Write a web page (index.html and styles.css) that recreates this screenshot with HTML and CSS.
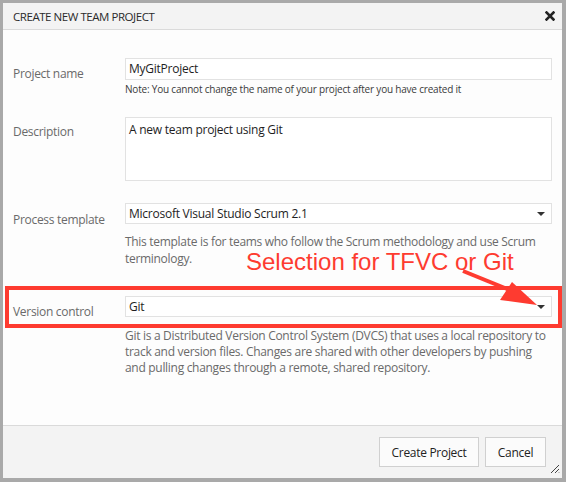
FILE: index.html
```html
<!DOCTYPE html>
<html>
<head>
<meta charset="utf-8">
<link rel="stylesheet" href="styles.css">
</head>
<body>
<div class="dialog">
  <div class="header">
    <span class="title">CREATE NEW TEAM PROJECT</span>
    <svg class="close" width="10" height="10" viewBox="0 0 10 10"><path d="M1.5 1.5 L8.5 8.5 M8.5 1.5 L1.5 8.5" stroke="#222" stroke-width="2.6" stroke-linecap="square"/></svg>
  </div>
  <div class="content">
    <div class="row row-name">
      <div class="label">Project name</div>
      <div class="field">
        <div class="input">MyGitProject</div>
        <div class="note">Note: You cannot change the name of your project after you have created it</div>
      </div>
    </div>
    <div class="row row-desc">
      <div class="label">Description</div>
      <div class="field">
        <div class="textarea">A new team project using Git</div>
      </div>
    </div>
    <div class="row row-proc">
      <div class="label">Process template</div>
      <div class="field">
        <div class="select"><span>Microsoft Visual Studio Scrum 2.1</span><span class="caret"></span></div>
        <div class="help help-proc">This template is for teams who follow the Scrum methodology and use Scrum terminology.</div>
      </div>
    </div>
    <div class="row row-vc">
      <div class="label">Version control</div>
      <div class="field">
        <div class="select"><span>Git</span><span class="caret"></span></div>
        <div class="help help-vc">Git is a Distributed Version Control System (DVCS) that uses a local repository to track and version files. Changes are shared with other developers by pushing and pulling changes through a remote, shared repository.</div>
      </div>
    </div>
  </div>
  <div class="footer">
    <button class="btn btn-create">Create Project</button>
    <button class="btn btn-cancel">Cancel</button>
    <svg class="grip" width="12" height="12" viewBox="0 0 12 12"><path d="M11 3 L3 11 M11 7 L7 11 M11 10.5 L10.5 11" stroke="#444" stroke-width="1"/></svg>
  </div>
</div>
<div class="annot-box"></div>
<div class="annot-text">Selection for TFVC or Git</div>
<svg class="annot-arrow" width="566" height="482" viewBox="0 0 566 482">
  <line x1="463" y1="271" x2="512" y2="291" stroke="#fe3b30" stroke-width="4"/>
  <polygon points="537,305 512,282 500,300" fill="#fe3b30"/>
</svg>
</body>
</html>
```
FILE: styles.css
```css
html, body { margin: 0; padding: 0; }
body {
  width: 566px;
  height: 482px;
  background: #a9a9a9;
  font-family: "Open Sans", "Noto Sans", sans-serif;
  position: relative;
  overflow: hidden;
}
.dialog {
  position: absolute;
  left: 3px;
  top: 3px;
  width: 559px;
  height: 475px;
  background: #fdfdfd;
  display: flex;
  flex-direction: column;
  letter-spacing: -0.3px;
}
.header {
  height: 27px;
  background: #f3f3f3;
  border-bottom: 1px solid #dadada;
  display: flex;
  align-items: center;
  justify-content: space-between;
  padding: 0 7px 0 10px;
  box-sizing: border-box;
}
.title {
  font-size: 11.5px;
  color: #2b2b2b;
  letter-spacing: -0.45px;
}
.close { display: block; }
.content {
  flex: 1;
  padding: 28px 10px 0 10px;
}
.row { display: flex; }
.label {
  width: 112px;
  flex: none;
  font-size: 12px;
  color: #6a6a6a;
  padding-top: 7px;
}
.field { flex: 1; }
.input, .textarea, .select {
  border: 1px solid #e2e2e2;
  background: #fff;
  font-size: 12px;
  letter-spacing: -0.25px;
  color: #1e1e1e;
  box-sizing: border-box;
  padding: 0 3px;
}
.input { height: 22px; line-height: 20px; }
.note {
  font-size: 10px;
  color: #3a3a3a;
  margin-top: 2px;
  line-height: 14px;
  letter-spacing: -0.2px;
}
.row-desc { margin-top: 21px; }
.row-desc .label { padding-top: 6px; }
.textarea { height: 64px; padding-top: 3px; line-height: 18px; }
.row-proc { margin-top: 22px; }
.row-proc .label { padding-top: 8px; }
.select {
  height: 21px;
  line-height: 19px;
  display: flex;
  justify-content: space-between;
  align-items: center;
  padding-right: 6px;
}
.caret {
  width: 0; height: 0;
  border-left: 4px solid transparent;
  border-right: 4px solid transparent;
  border-top: 4px solid #333;
}
.help {
  font-size: 12px;
  color: #6a6a6a;
}
.help-proc { margin-top: 9px; line-height: 17px; }
.row-vc { margin-top: 29px; }
.row-vc .label { padding-top: 7px; }
.help-vc { margin-top: 11px; line-height: 16px; }
.footer {
  height: 53px;
  background: #f3f3f3;
  border-top: 1px solid #dadada;
  box-sizing: border-box;
  display: flex;
  justify-content: flex-end;
  align-items: flex-start;
  gap: 6px;
  padding: 11px 16px 0 0;
  position: relative;
}
.btn {
  font-family: inherit;
  font-size: 12px;
  letter-spacing: -0.3px;
  color: #222;
  background: #fbfbfb;
  border: 1px solid #d0d0d0;
  height: 30px;
  padding: 0;
  white-space: nowrap;
}
.btn-create { width: 100px; }
.btn-cancel { width: 61px; }
.grip { position: absolute; right: 2px; bottom: 4px; }
.annot-box {
  position: absolute;
  left: 5px;
  top: 286px;
  width: 557px;
  height: 42px;
  border: 4px solid #fe3b30;
  box-sizing: border-box;
}
.annot-text {
  position: absolute;
  left: 246px;
  top: 248px;
  font-family: "Liberation Sans", Arial, sans-serif;
  font-size: 24px;
  line-height: 28px;
  color: #fe3b30;
}
.annot-arrow { position: absolute; left: 0; top: 0; }
```
